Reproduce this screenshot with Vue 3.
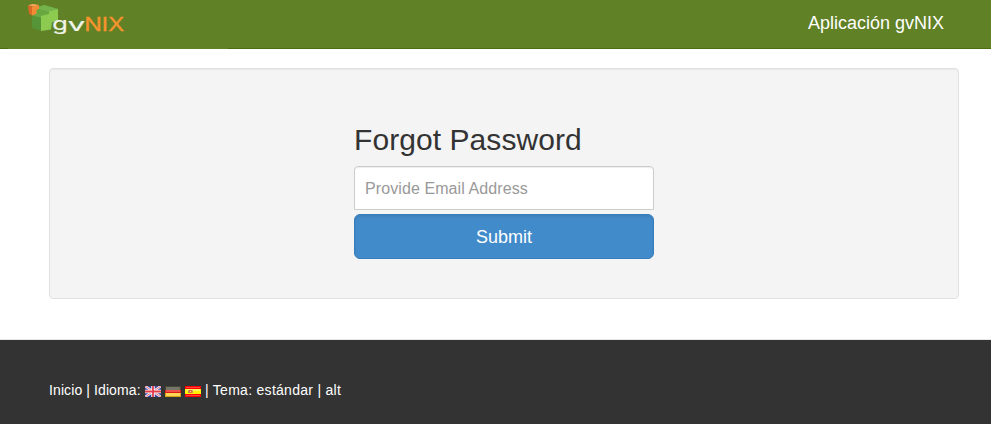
<script setup>
import { ref } from 'vue'

const email = ref('')
</script>

<template>
  <div class="page">
    <header class="navbar">
      <a class="home">
        <svg class="logo" width="100" height="36" viewBox="27 3 100 36" role="img" aria-label="gvNIX">
          <path d="M36 8l8-3 14 4v7l-6 3H36z" fill="#66a83f" />
          <path d="M36 8l8-3 14 4-8 3z" fill="#74b34b" />
          <path d="M32 15.500l9 2v13.500l-9-3z" fill="#559437" />
          <path d="M32 15.500l5-2 9 2-5 2z" fill="#6aaa45" />
          <path d="M49 11.500l9-2.500v12l-9 2z" fill="#7fbe4c" />
          <path d="M41 16l8-2v-2.500l9-2v11l-6 1-1 8-10 1.500z" fill="#8dcb50" />
          <path d="M28 5.200l5-1.200 6 1-5 1.800z" fill="#ffa45b" />
          <path d="M28 5.200l4 1.500v8.800l-3-1.800z" fill="#d96a27" />
          <path d="M32 6.700l7-1.700v4l-2.500.8v4l-4.500 1.700z" fill="#f48b35" />
          <text class="wordmark light" x="52.300" y="29.800" textLength="15.500" lengthAdjust="spacingAndGlyphs">g</text>
          <text class="wordmark light" x="67.800" y="31" textLength="17.500" lengthAdjust="spacingAndGlyphs">v</text>
          <text class="wordmark orange" x="84.200" y="31.200" textLength="40" lengthAdjust="spacingAndGlyphs">NIX</text>
        </svg>
      </a>
      <a class="brand">Aplicación gvNIX</a>
    </header>

    <main class="well">
      <form class="form" @submit.prevent>
        <h2>Forgot Password</h2>
        <input v-model="email" type="email" placeholder="Provide Email Address" />
        <button type="submit">Submit</button>
      </form>
    </main>

    <footer class="footer">
      <span class="nav"><a>Inicio</a> | Idioma:</span>
      <span class="flags">
        <svg width="16" height="11" viewBox="0 0 16 11">
          <path d="M0 0h16v11H0z" fill="#34459c" />
          <path d="M0 0l16 11M16 0L0 11" stroke="#f4f0f5" stroke-width="2.4" />
          <path d="M0 0l16 11M16 0L0 11" stroke="#e04b5b" stroke-width=".8" />
          <path d="M8 0v11M0 5.500h16" stroke="#fff" stroke-width="3.400" />
          <path d="M8 0v11M0 5.500h16" stroke="#e33b49" stroke-width="1.800" />
        </svg>
        <svg width="16" height="11" viewBox="0 0 16 11">
          <path d="M0 0h16v4H0z" fill="#45463a" />
          <path d="M1 1h14v3H1z" fill="#777568" />
          <path d="M0 4h16v3H0z" fill="#d91d10" />
          <path d="M1 4h14v2H1z" fill="#ee5148" />
          <path d="M0 7h16v4H0z" fill="#d2a51d" />
          <path d="M1 7h14v3H1z" fill="#ffd557" />
        </svg>
        <svg width="16" height="11" viewBox="0 0 16 11">
          <path d="M0 0h16v11H0z" fill="#f00" />
          <path d="M1 1h14v1H1zM1 9h14v1H1z" fill="#ff4438" />
          <path d="M0 3h16v5H0z" fill="#fff200" />
          <path d="M1 3h14v2H1z" fill="#fff65b" />
          <path d="M3 4h1v3H3zM7 4h1v3H7z" fill="#c99b62" />
          <path d="M4 4h3v3H4z" fill="#de6b38" />
          <path d="M5 5h1v1H5z" fill="#f5d9b8" />
        </svg>
      </span>
      <span class="themes">| Tema: <a>estándar</a> | <a>alt</a></span>
    </footer>
  </div>
</template>

<style>
body {
  margin: 0;
}
</style>

<style scoped>
.page {
  box-sizing: border-box;
  height: 424px;
  display: flex;
  flex-direction: column;
  overflow: hidden;
  background: #fff;
  font-family: "Liberation Sans", Arial, sans-serif;
  font-size: 14px;
  line-height: 20px;
  color: #333;
}

.navbar {
  box-sizing: border-box;
  height: 49px;
  flex: none;
  display: flex;
  justify-content: space-between;
  align-items: flex-start;
  padding: 0 47px 0 8px;
  background: #608126;
  box-shadow: inset 0 -1px #4c7010;
}

.home {
  box-sizing: border-box;
  width: 220px;
  height: 49px;
  padding: 3px 0 0 19px;
  background: #608126;
}

.logo {
  display: block;
}

.wordmark {
  font-family: Inter, sans-serif;
  font-size: 17.5px;
  font-weight: 400;
}

.light {
  fill: #f1f4e9;
  stroke: #f1f4e9;
  stroke-width: 0.2px;
}

.orange {
  font-size: 18.3px;
  fill: #f7942d;
  stroke: #f7942d;
  stroke-width: 0.3px;
}

.brand {
  margin-top: 13px;
  font-size: 18px;
  color: #fff;
}

.well {
  box-sizing: border-box;
  flex: none;
  width: 910px;
  height: 231px;
  margin: 19px 0 0 49px;
  padding-top: 54px;
  background: #f4f4f4;
  border: 1px solid #e2e2e2;
  border-radius: 4px;
  box-shadow: inset 0 1px 1px rgba(0, 0, 0, 0.05);
}

.form {
  width: 300px;
  margin-left: 304px;
  display: flex;
  flex-direction: column;
}

h2 {
  margin: 0 0 10px;
  font-size: 30px;
  font-weight: 400;
  line-height: 33px;
  letter-spacing: 0.07px;
}

input {
  box-sizing: border-box;
  width: 100%;
  height: 44px;
  padding: 11px 10px 9px;
  background: #fff;
  border: 1px solid #ccc;
  border-radius: 4px 4px 0 0;
  box-shadow: inset 0 1px 1px rgba(0, 0, 0, 0.075);
  font: 16px "Liberation Sans", Arial, sans-serif;
  letter-spacing: 0.09px;
  color: #555;
}

input::placeholder {
  color: #999;
  opacity: 1;
}

button {
  height: 45px;
  margin-top: 4px;
  padding: 2px 0 0;
  background: #428bca;
  border: 1px solid #357ebd;
  border-radius: 6px;
  box-shadow: inset 0 2px 3px rgba(0, 0, 0, 0.08);
  font: 18px "Liberation Sans", Arial, sans-serif;
  color: #fff;
}

.footer {
  box-sizing: border-box;
  flex: none;
  display: flex;
  gap: 4px;
  height: 85px;
  margin-top: 40px;
  padding: 40px 49px 0;
  background: #333;
  border-top: 1px solid #e7e7e7;
  color: #fff;
  white-space: nowrap;
}

.nav {
  width: 92px;
  letter-spacing: 0.1px;
}

.flags {
  display: flex;
  gap: 4px;
  padding-top: 6px;
}

.themes {
  letter-spacing: 0.28px;
}
</style>
